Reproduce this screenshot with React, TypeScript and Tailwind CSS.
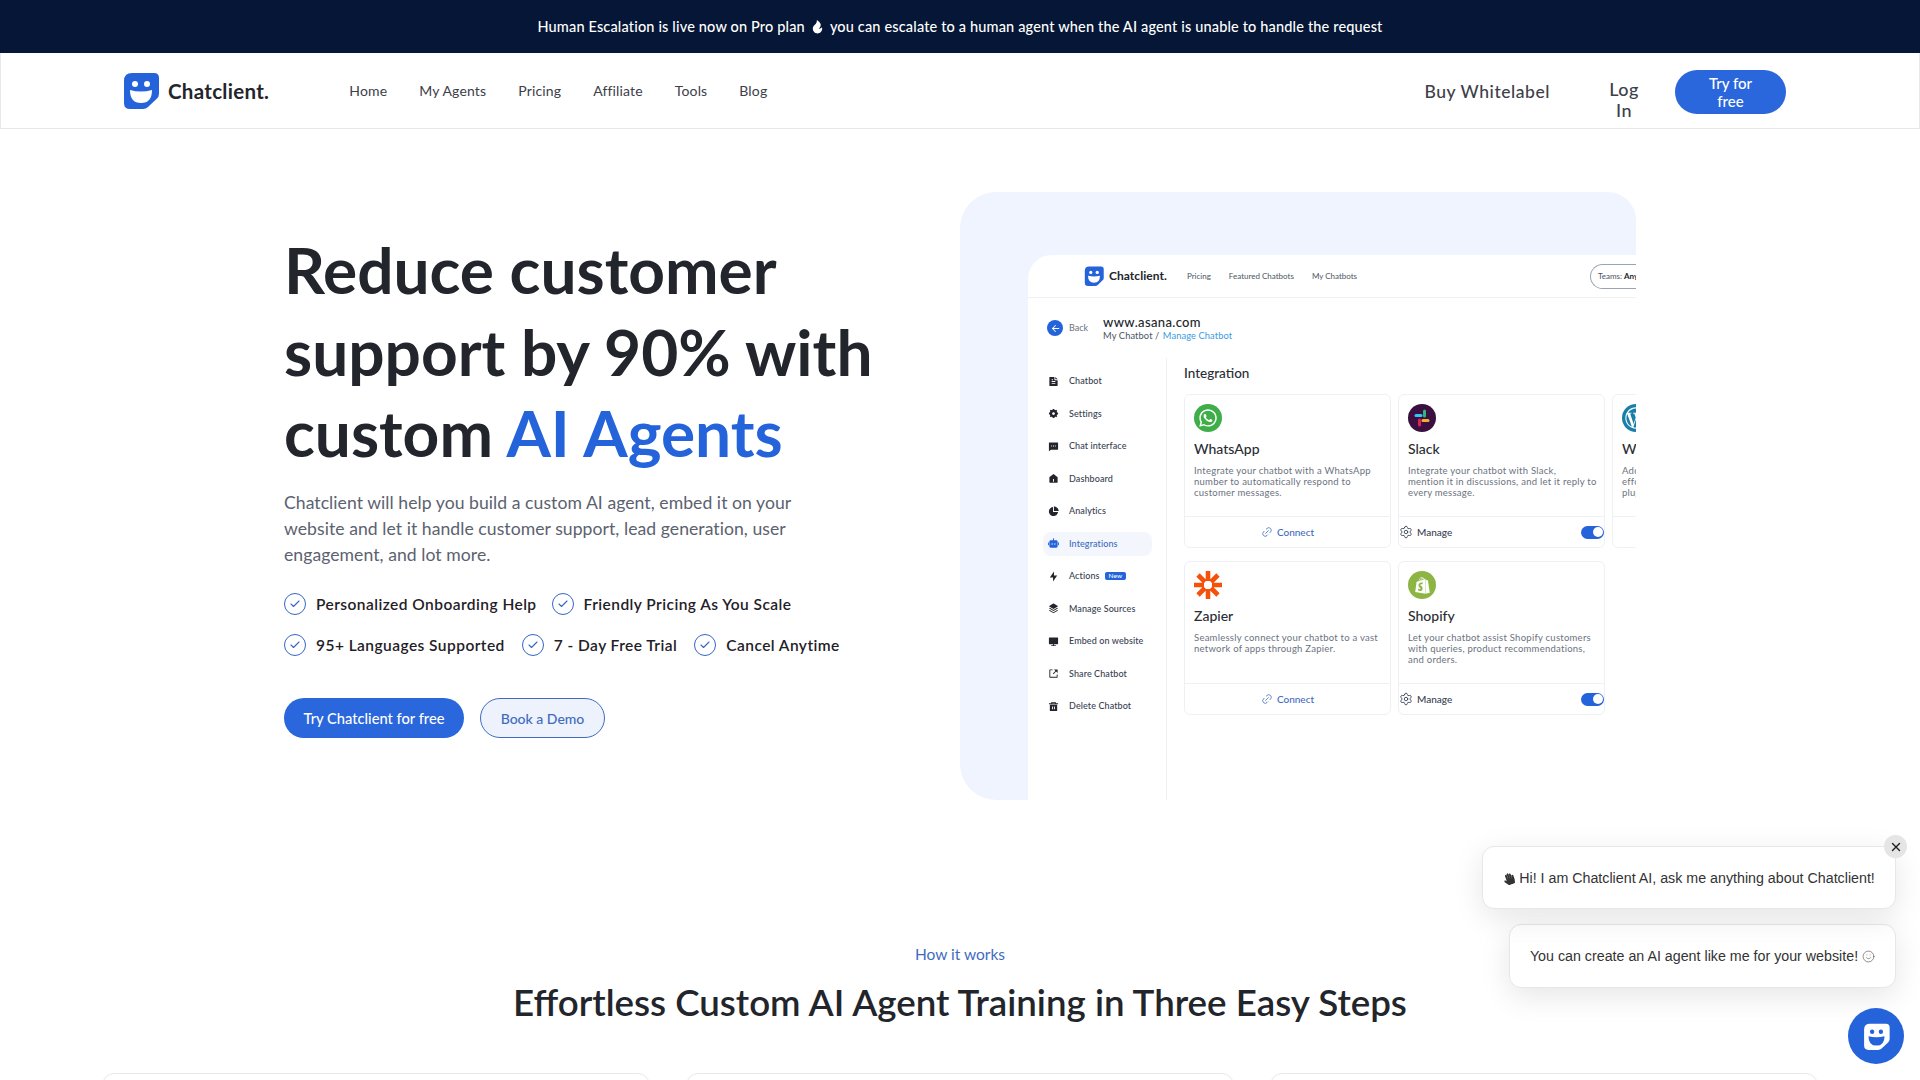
import { Check, Link2, Settings, Smile, X } from 'lucide-react';
import { FaHandPaper, FaShopify, FaWhatsapp, FaWordpressSimple } from 'react-icons/fa';
import {
  RiArrowLeftLine,
  RiComputerFill,
  RiDeleteBin5Fill,
  RiFileTextFill,
  RiFireFill,
  RiFlashlightFill,
  RiHome5Fill,
  RiMessage2Fill,
  RiPieChart2Fill,
  RiSettings5Fill,
  RiShareBoxFill,
  RiStackFill,
  RiRobot2Fill,
} from 'react-icons/ri';
import type { ComponentType, ReactNode } from 'react';

function Logo({ className, invert }: { className: string; invert?: boolean }) {
  const bg = invert ? '#fff' : '#2563db';
  const fg = invert ? '#2563db' : '#fff';
  return (
    <svg viewBox="0 0 36 37" className={className}>
      <path d="M9 1H31Q36 1 36 6V22Q36 25 33.5 27L25 35Q23 37 20 37H7Q1 37 1 31V9Q1 1 9 1Z" fill={bg} />
      <circle cx="12" cy="12" r="3" fill={fg} />
      <circle cx="24" cy="12" r="3" fill={fg} />
      <path d="M7 18Q18 21 29 18Q29 31 18 31Q7 31 7 18Z" fill={fg} />
    </svg>
  );
}

function CheckItem({ children }: { children: ReactNode }) {
  return (
    <div className="flex items-center gap-[10px]">
      <span className="flex h-[22px] w-[22px] items-center justify-center rounded-full border-[1.5px] border-[#3566c4] text-[#3566c4]">
        <Check size={12} strokeWidth={2.2} />
      </span>
      <span className="text-[15.5px] font-semibold tracking-[0.45px] text-[#1f2128]">{children}</span>
    </div>
  );
}

const sidebar: { label: string; icon: ComponentType<{ size?: number; className?: string }>; active?: boolean; isNew?: boolean }[] = [
  { label: 'Chatbot', icon: RiFileTextFill },
  { label: 'Settings', icon: RiSettings5Fill },
  { label: 'Chat interface', icon: RiMessage2Fill },
  { label: 'Dashboard', icon: RiHome5Fill },
  { label: 'Analytics', icon: RiPieChart2Fill },
  { label: 'Integrations', icon: RiRobot2Fill, active: true },
  { label: 'Actions', icon: RiFlashlightFill, isNew: true },
  { label: 'Manage Sources', icon: RiStackFill },
  { label: 'Embed on website', icon: RiComputerFill },
  { label: 'Share Chatbot', icon: RiShareBoxFill },
  { label: 'Delete Chatbot', icon: RiDeleteBin5Fill },
];

function ZapierIcon() {
  return (
    <svg viewBox="0 0 28 28" className="h-7 w-7" stroke="#f4510b" strokeWidth="4.6">
      <path d="M14 0V10M14 18V28M0 14H10M18 14H28M4 4L11 11M17 17L24 24M24 4L17 11M11 17L4 24" />
    </svg>
  );
}

function SlackIcon() {
  return (
    <svg viewBox="0 0 28 28" className="h-7 w-7">
      <circle cx="14" cy="14" r="14" fill="#3b0f3f" />
      <g strokeWidth="3" strokeLinecap="round">
        <path d="M8 11.5H13" stroke="#36c5f0" />
        <path d="M16.5 7V12" stroke="#2eb67d" />
        <path d="M15 16.5H20" stroke="#ecb22e" />
        <path d="M11.5 16V21" stroke="#e01e5a" />
      </g>
    </svg>
  );
}

function IntegrationCard({
  icon,
  title,
  text,
  manage,
}: {
  icon: ReactNode;
  title: string;
  text: string;
  manage?: boolean;
}) {
  return (
    <div className="flex h-[154px] w-[207px] shrink-0 flex-col rounded-md border border-[#eef0f3] bg-white">
      <div className="h-[121px] overflow-hidden px-[9px] pt-[9px]">
        {icon}
        <div className="mt-[7px] text-[14px] font-medium leading-[20px] whitespace-nowrap text-[#2a2d34]">{title}</div>
        <p className="mt-[6px] whitespace-pre text-[9.5px] leading-[11px] tracking-[0.25px] text-[#6b7280]">{text}</p>
      </div>
      <div className="flex flex-1 items-center border-t border-[#eef0f3]">
        {manage ? (
          <div className="flex w-full items-center justify-between">
            <div className="flex items-center gap-[4px] text-[10px] font-medium text-[#374151]">
              <Settings size={14} strokeWidth={1.5} />
              Manage
            </div>
            <span className="flex h-[13px] w-[23px] items-center justify-end rounded-full bg-[#2563db] pr-[1px]">
              <span className="h-[10px] w-[10px] rounded-full bg-white" />
            </span>
          </div>
        ) : (
          <div className="flex w-full items-center justify-center gap-[4px] text-[10px] font-medium text-[#3f6cc0]">
            <Link2 size={12} strokeWidth={1.5} className="-rotate-45" />
            Connect
          </div>
        )}
      </div>
    </div>
  );
}

function Round({ className, children }: { className: string; children: ReactNode }) {
  return <span className={`flex h-7 w-7 items-center justify-center rounded-full ${className}`}>{children}</span>;
}

function Screenshot() {
  return (
    <div className="h-[608px] w-[676px] overflow-hidden rounded-tl-[36px] rounded-tr-[28px] rounded-bl-[36px] bg-[#eff4fe] pl-[68px] pt-[63px]">
      <div className="h-[545px] w-[608px] rounded-tl-[24px] bg-white">
        <div className="flex h-[43px] items-center border-b border-[#eef0f3] pl-[56px]">
          <Logo className="h-[20px] w-[20px]" />
          <span className="ml-[5px] text-[12px] font-bold tracking-[0.05px] text-[#22252b]">Chatclient.</span>
          <span className="ml-[20px] text-[8px] text-[#4b5563]">Pricing</span>
          <span className="ml-[18px] text-[8px] text-[#4b5563]">Featured Chatbots</span>
          <span className="ml-[18px] text-[8px] text-[#4b5563]">My Chatbots</span>
          <span className="ml-auto flex h-[25px] w-[46px] items-center overflow-hidden rounded-l-full border border-r-0 border-[#9aa3b2] pl-[7px] text-[8px] whitespace-nowrap text-[#4b5563]">
            Teams: <b className="ml-[2px] text-[#22252b]">Any</b>
          </span>
        </div>
        <div className="flex h-[60px] items-center pl-[19px]">
          <span className="flex h-4 w-4 items-center justify-center rounded-full bg-[#2563db] text-white">
            <RiArrowLeftLine size={11} />
          </span>
          <span className="ml-[6px] text-[9px] text-[#6b7280]">Back</span>
          <div className="ml-[15px]">
            <div className="text-[13px] font-medium leading-[15px] tracking-[0.35px] text-[#22252b]">www.asana.com</div>
            <div className="text-[9.3px] leading-[12px] tracking-[0.1px] text-[#4b5563]">
              My Chatbot / <span className="ml-[1px] text-[#3b9be0]">Manage Chatbot</span>
            </div>
          </div>
        </div>
        <div className="flex">
          <div className="h-[442px] w-[139px] shrink-0 border-r border-[#eef0f3] pl-[15px] pt-[11px]">
            {sidebar.map(({ label, icon: Icon, active, isNew }) => (
              <div
                key={label}
                className={`mb-[8.5px] flex h-[24px] w-[109px] items-center rounded-lg pl-[5px] text-[9px] font-medium tracking-[0.1px] ${
                  active ? 'bg-[#f3f6fc] text-[#3f6cc0]' : 'text-[#374151]'
                }`}
              >
                <Icon size={11} className={active ? 'text-[#2563db]' : 'text-[#22252b]'} />
                <span className="ml-[10px] whitespace-nowrap">{label}</span>
                {isNew && (
                  <span className="ml-[5px] rounded-[2px] bg-[#2563db] px-[4px] text-[6.5px] leading-[8px] text-white">New</span>
                )}
              </div>
            ))}
          </div>
          <div className="pl-[17px]">
            <div className="pt-[5px] text-[13.5px] font-medium leading-[20px] text-[#2a2d34]">Integration</div>
            <div className="mt-[11px] flex w-[452px] gap-[7px] overflow-hidden">
              <IntegrationCard
                icon={<Round className="bg-[#3fae49] text-white"><FaWhatsapp size={20} /></Round>}
                title="WhatsApp"
                text={'Integrate your chatbot with a WhatsApp\nnumber to automatically respond to\ncustomer messages.'}
              />
              <IntegrationCard
                manage
                icon={<SlackIcon />}
                title="Slack"
                text={'Integrate your chatbot with Slack,\nmention it in discussions, and let it reply to\nevery message.'}
              />
              <IntegrationCard
                icon={<Round className="bg-[#1a7fa8] text-white"><FaWordpressSimple size={22} /></Round>}
                title="WordPress"
                text={'Add your chatbot\neffortlessly with our\nplugin.'}
              />
            </div>
            <div className="mt-[13px] flex gap-[7px]">
              <IntegrationCard
                icon={<ZapierIcon />}
                title="Zapier"
                text={'Seamlessly connect your chatbot to a vast\nnetwork of apps through Zapier.'}
              />
              <IntegrationCard
                manage
                icon={<Round className="bg-[#8db543] text-white"><FaShopify size={17} /></Round>}
                title="Shopify"
                text={'Let your chatbot assist Shopify customers\nwith queries, product recommendations,\nand orders.'}
              />
            </div>
          </div>
        </div>
      </div>
    </div>
  );
}

export default function App() {
  return (
    <div className="relative h-screen overflow-hidden bg-white font-['Lato',sans-serif]">
      <div className="flex h-[53px] items-center justify-center gap-[5px] bg-[#061636] text-[14.5px] font-medium tracking-[0.16px] text-white">
        Human Escalation is live now on Pro plan <RiFireFill size={15} /> you can escalate to a human agent when the AI agent is unable to handle the request
      </div>

      <nav className="flex h-[76px] items-center border border-t-0 border-[#e7e8ea] pl-[122px] pr-[133px]">
        <Logo className="h-[37px] w-[36px]" />
        <span className="ml-[9px] mt-[1px] text-[20.5px] font-bold tracking-[0.3px] text-[#22252b]">Chatclient.</span>
        <div className="ml-[80px] flex gap-[32px] text-[14px] tracking-[0.15px] text-[#3c4049]">
          <span>Home</span>
          <span>My Agents</span>
          <span>Pricing</span>
          <span>Affiliate</span>
          <span>Tools</span>
          <span>Blog</span>
        </div>
        <span className="ml-auto mt-[3px] text-[17.5px] font-medium tracking-[0.55px] text-[#3c4049]">Buy Whitelabel</span>
        <span className="ml-[58px] mt-[18px] w-[32px] text-center text-[18px] font-medium leading-[21px] tracking-[0.4px] text-[#3c4049]">Log In</span>
        <span className="ml-[35px] mt-[2px] flex h-[44px] w-[111px] items-center justify-center rounded-full bg-[#2a66dc] px-[28px] text-center text-[15px] font-medium leading-[18px] text-white">
          Try for free
        </span>
      </nav>

      <section className="flex pl-[284px] pt-[63px]">
        <div className="w-[676px] pt-[37px]">
          <h1 className="text-[64px] font-bold leading-[81.5px] text-[#22252b]">
            Reduce customer
            <br />
            support by 90% with
            <br />
            custom <span className="text-[#2563db]">AI Agents</span>
          </h1>
          <p className="mt-[16px] w-[540px] text-[17.6px] leading-[26px] tracking-[0.05px] text-[#5b6270]">
            Chatclient will help you build a custom AI agent, embed it on your website and let it handle customer support, lead generation, user engagement, and lot more.
          </p>
          <div className="mt-[25px] flex gap-[15px]">
            <CheckItem>Personalized Onboarding Help</CheckItem>
            <CheckItem>Friendly Pricing As You Scale</CheckItem>
          </div>
          <div className="mt-[18px] flex gap-[17px]">
            <CheckItem>95+ Languages Supported</CheckItem>
            <CheckItem>7 - Day Free Trial</CheckItem>
            <CheckItem>Cancel Anytime</CheckItem>
          </div>
          <div className="mt-[41px] flex gap-4">
            <span className="flex h-10 w-[180px] items-center justify-center rounded-full bg-[#2a66dc] text-[14.7px] font-medium text-white">
              Try Chatclient for free
            </span>
            <span className="flex h-10 w-[125px] items-center justify-center rounded-full border border-[#3f6cc0] bg-[#edf2fc] text-[14px] font-medium text-[#3f6cc0]">
              Book a Demo
            </span>
          </div>
        </div>
        <Screenshot />
      </section>

      <section className="pt-[142px] text-center">
        <div className="text-[15.5px] leading-[24px] text-[#3f6cc0]">How it works</div>
        <h2 className="mt-[14px] text-[36.7px] font-semibold leading-[44px] text-[#22252b]">
          Effortless Custom AI Agent Training in Three Easy Steps
        </h2>
        <div className="mt-[49px] flex justify-center gap-[36px]">
          <div className="h-[100px] w-[548px] rounded-xl border border-[#e7e8ea]" />
          <div className="h-[100px] w-[548px] rounded-xl border border-[#e7e8ea]" />
          <div className="h-[100px] w-[548px] rounded-xl border border-[#e7e8ea]" />
        </div>
      </section>

      <div className="absolute right-[24px] top-[846px] flex flex-col items-end gap-[15px] font-['Liberation_Sans',sans-serif] text-[14.25px] text-[#333]">
        <div className="relative flex h-[63px] w-[414px] items-center justify-center gap-[4px] rounded-xl border border-[#e5e7eb] bg-white pt-[2px] shadow-[0_8px_30px_rgba(0,0,0,0.1)]">
          <FaHandPaper size={12} className="-rotate-20 text-[#333]" />
          Hi! I am Chatclient AI, ask me anything about Chatclient!
          <span className="absolute -right-[12px] -top-[12px] flex h-[23px] w-[23px] items-center justify-center rounded-full bg-[#e5e5e5]">
            <X size={14} strokeWidth={2.5} className="text-[#222]" />
          </span>
        </div>
        <div className="flex h-[64px] w-[387px] items-center justify-center gap-[4px] rounded-xl border border-[#e5e7eb] bg-white pt-[1px] shadow-[0_8px_30px_rgba(0,0,0,0.1)]">
          You can create an AI agent like me for your website!
          <Smile size={13} strokeWidth={1.2} className="text-[#555]" />
        </div>
      </div>
      <div className="absolute left-[1848px] top-[1008px] flex h-[56px] w-[56px] items-center justify-center rounded-full bg-[#2563db]">
        <Logo className="h-[27px] w-[27px]" invert />
      </div>
    </div>
  );
}
